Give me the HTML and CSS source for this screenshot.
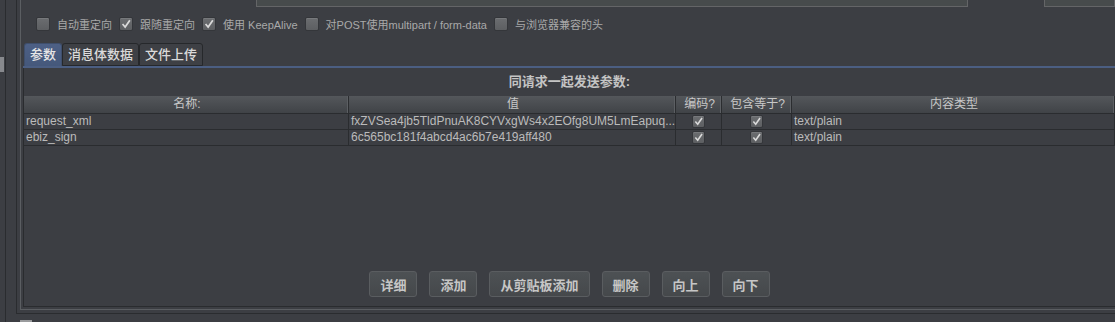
FILE: index.html
```html
<!DOCTYPE html>
<html lang="zh-CN">
<head>
  <meta charset="UTF-8" />
  <title>HTTP请求 - 参数</title>
  <link rel="stylesheet" href="styles.css">
</head>
<body>
  <div class="grip"><span class="grip-dots"></span></div>

  <div class="workspace">
    <div class="frame-outer">
      <div class="frame-inner">
        <div class="fields">
          <div class="field field-path"></div>
          <div class="field field-encoding"></div>
        </div>

        <div class="options">
          <label class="opt"><span class="cb"></span>自动重定向</label>
          <label class="opt"><span class="cb checked"><svg viewBox="0 0 14 14"><path d="M3 7 L6 10.5 L11.5 2.5" /></svg></span>跟随重定向</label>
          <label class="opt"><span class="cb checked"><svg viewBox="0 0 14 14"><path d="M3 7 L6 10.5 L11.5 2.5" /></svg></span>使用 KeepAlive</label>
          <label class="opt"><span class="cb"></span>对POST使用multipart / form-data</label>
          <label class="opt"><span class="cb"></span>与浏览器兼容的头</label>
        </div>

        <div class="tabs">
          <div class="tab active">参数</div>
          <div class="tab">消息体数据</div>
          <div class="tab">文件上传</div>
        </div>

        <div class="panel">
          <div class="panel-title">同请求一起发送参数:</div>

          <div class="params">
            <div class="row head">
              <div class="cell">名称:</div>
              <div class="cell">值</div>
              <div class="cell">编码?</div>
              <div class="cell">包含等于?</div>
              <div class="cell">内容类型</div>
            </div>
            <div class="row">
              <div class="cell">request_xml</div>
              <div class="cell">fxZVSea4jb5TldPnuAK8CYVxgWs4x2EOfg8UM5LmEapuq...</div>
              <div class="cell center"><span class="cb small checked"><svg viewBox="0 0 14 14"><path d="M3 7 L6 10.5 L11.5 2.5" /></svg></span></div>
              <div class="cell center"><span class="cb small checked"><svg viewBox="0 0 14 14"><path d="M3 7 L6 10.5 L11.5 2.5" /></svg></span></div>
              <div class="cell">text/plain</div>
            </div>
            <div class="row">
              <div class="cell">ebiz_sign</div>
              <div class="cell">6c565bc181f4abcd4ac6b7e419aff480</div>
              <div class="cell center"><span class="cb small checked"><svg viewBox="0 0 14 14"><path d="M3 7 L6 10.5 L11.5 2.5" /></svg></span></div>
              <div class="cell center"><span class="cb small checked"><svg viewBox="0 0 14 14"><path d="M3 7 L6 10.5 L11.5 2.5" /></svg></span></div>
              <div class="cell">text/plain</div>
            </div>
          </div>

          <div class="buttons">
            <button>详细</button>
            <button>添加</button>
            <button>从剪贴板添加</button>
            <button>删除</button>
            <button>向上</button>
            <button>向下</button>
          </div>
        </div>
      </div>
    </div>
    <div class="knob"></div>
  </div>
</body>
</html>
```

FILE: styles.css
```css
* { box-sizing: border-box; }
body {
  margin: 0; height: 322px; overflow: hidden; display: flex;
  background: #3c3e43; color: #bbbbbb;
  font-family: "Liberation Sans", "Noto Sans CJK SC", sans-serif; font-size: 12px;
}

/* left splitter */
.grip { width: 6px; border-right: 1px solid #2a2c2f; }
.grip-dots {
  display: block; width: 4px; height: 15px; margin-top: 57px;
  background-image: radial-gradient(#8a8c8f 0.7px, transparent 1px);
  background-size: 2px 2px;
}

.workspace { flex: 1; margin-left: 10px; display: flex; flex-direction: column; }
.frame-outer { height: 315px; border-left: 1px solid #2a2c2f; border-bottom: 1px solid #2a2c2f; padding: 0 0 3px 3px; }
.frame-inner { height: 100%; display: flex; flex-direction: column; border-left: 1px solid #5b5e62; border-bottom: 1px solid #5b5e62; padding: 0 0 2px 2px; }
.knob { width: 12px; height: 2px; margin: 6px 0 0 4px; background: #9a9b9d; }

/* fields cut off at the top */
.fields { height: 7px; display: flex; }
.field { height: 7px; background: #474b4c; border: 1px solid #646567; border-top: none; }
.field-path { width: 712px; margin-left: 233px; }
.field-encoding { flex: 1; margin-left: 76px; }

/* checkbox row */
.options { display: flex; gap: 7px; margin-top: 10px; padding-left: 13px; height: 14px; align-items: center; font-size: 11px; color: #a9a9a9; }
.opt { display: flex; align-items: center; gap: 7px; white-space: nowrap; }
.cb {
  flex: none; width: 14px; height: 14px; border: 1px solid #34363a; border-radius: 2px;
  background: linear-gradient(#6b6d70, #5d5f62); display: inline-flex; align-items: center; justify-content: center;
  box-shadow: inset 0 1px #77797c;
}
.cb svg { width: 12px; height: 12px; }
.cb path { fill: none; stroke: #dadada; stroke-width: 2; }
.cb.small { width: 13px; height: 13px; }
.cb.small svg { width: 11px; height: 11px; }

/* tabs */
.tabs { display: flex; margin-top: 12px; padding-left: 1px; height: 25px; border-bottom: 2px solid #4b5e82; }
.tab {
  height: 23px; padding: 0 5px; font-size: 13px; font-weight: 500; color: #dadada; line-height: 21px;
  border: 1px solid #26282b; border-radius: 3px 3px 0 0; background: #3e4045;
}
.tab.active { padding: 0 5px; height: 23px; border-color: #3f4f6c; border-bottom: none; background: linear-gradient(#4d6086, #45587b); color: #e6e6e6; }

/* parameters panel */
.panel { flex: 1; display: flex; flex-direction: column; border-left: 1px solid #2a2c2f; border-bottom: 1px solid #2a2c2f; }
.panel-title { height: 28px; line-height: 28px; text-align: center; font-size: 13px; font-weight: bold; color: #c4c4c4; }

.params { flex: 1; }
.row { display: grid; grid-template-columns: 325px 327px 46px 70px 1fr; height: 16px; border-bottom: 1px solid #2a2c2f; }
.cell { border-right: 1px solid #2a2c2f; padding-left: 2px; line-height: 15px; white-space: nowrap; overflow: hidden; }
.cell.center { display: flex; justify-content: center; align-items: center; padding: 0; }
.row.head { height: 18px; background: linear-gradient(#54575b, #404347); }
.row.head .cell { text-align: center; line-height: 17px; color: #c8c8c8; border-right-color: #2b2d30; box-shadow: inset -1px 0 #5c5f63; }

.buttons { display: flex; justify-content: center; gap: 12px; margin-bottom: 9px; }
button {
  height: 26px; padding: 0 10px; font-family: inherit; font-size: 13px; font-weight: bold; color: #c6c6c6;
  background: linear-gradient(#4d5154, #45484b); border: 1px solid #5a5d60; border-radius: 3px;
}
```
